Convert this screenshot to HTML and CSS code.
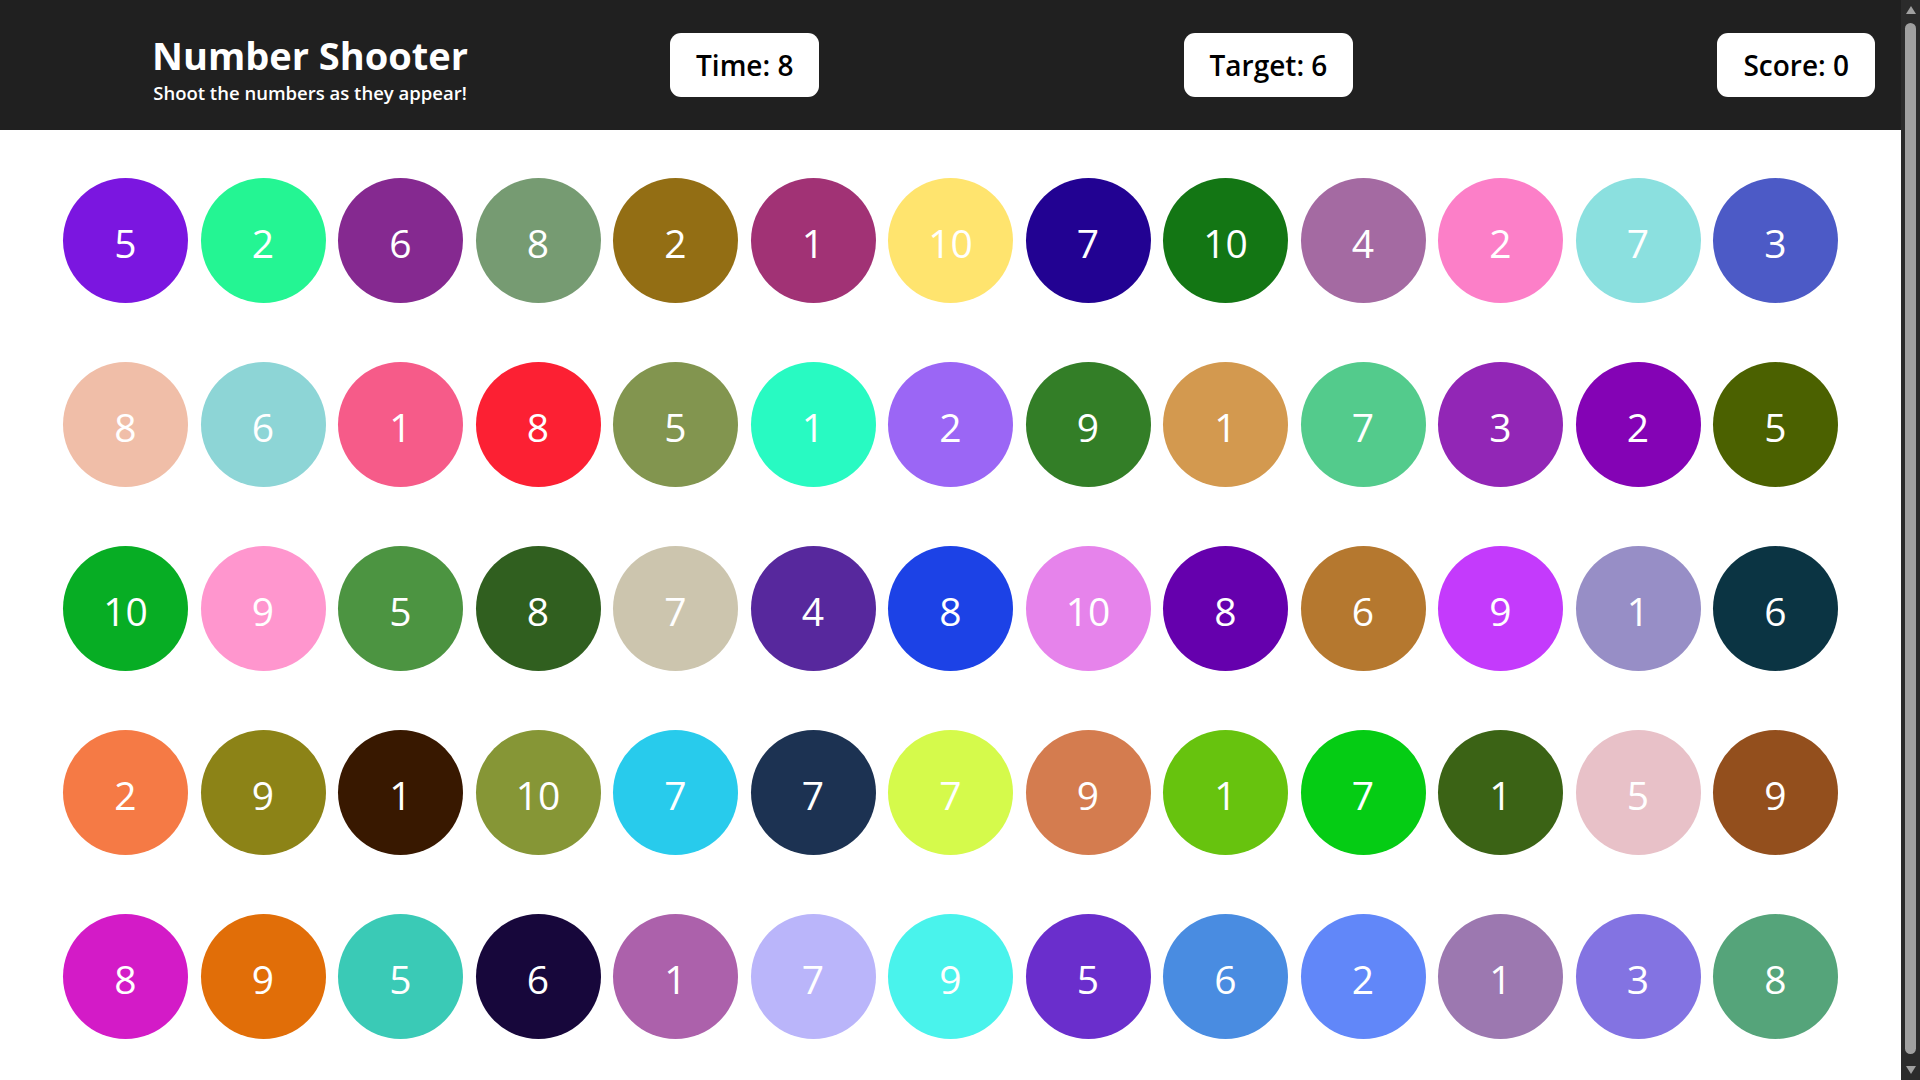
FILE: index.html
```html
<!DOCTYPE html>
<html lang="en">
<head>
<meta charset="utf-8">
<title>Number Shooter</title>
<link rel="stylesheet" href="styles.css">
</head>
<body>
<div class="page">
<header class="topbar">
  <div class="brand">
    <h1 class="brand-title">Number Shooter</h1>
    <p class="brand-sub">Shoot the numbers as they appear!</p>
  </div>
  <div class="stats">
    <div class="stat">Time: 8</div>
    <div class="stat">Target: 6</div>
    <div class="stat">Score: 0</div>
  </div>
</header>
<main class="board">
  <div class="ball" style="background:#7b16e0">5</div>
  <div class="ball" style="background:#24f593">2</div>
  <div class="ball" style="background:#852990">6</div>
  <div class="ball" style="background:#769b72">8</div>
  <div class="ball" style="background:#936e14">2</div>
  <div class="ball" style="background:#a13275">1</div>
  <div class="ball" style="background:#ffe46e">10</div>
  <div class="ball" style="background:#220292">7</div>
  <div class="ball" style="background:#137614">10</div>
  <div class="ball" style="background:#a46aa2">4</div>
  <div class="ball" style="background:#fc7fc8">2</div>
  <div class="ball" style="background:#8be0df">7</div>
  <div class="ball" style="background:#4c5ac6">3</div>

  <div class="ball" style="background:#f0bea8">8</div>
  <div class="ball" style="background:#8dd5d6">6</div>
  <div class="ball" style="background:#f65b89">1</div>
  <div class="ball" style="background:#fc2033">8</div>
  <div class="ball" style="background:#82954f">5</div>
  <div class="ball" style="background:#28fac2">1</div>
  <div class="ball" style="background:#9b66f5">2</div>
  <div class="ball" style="background:#337e27">9</div>
  <div class="ball" style="background:#d3994f">1</div>
  <div class="ball" style="background:#53cb8c">7</div>
  <div class="ball" style="background:#9226b6">3</div>
  <div class="ball" style="background:#8403b5">2</div>
  <div class="ball" style="background:#4b6100">5</div>

  <div class="ball" style="background:#07ad24">10</div>
  <div class="ball" style="background:#ff96ce">9</div>
  <div class="ball" style="background:#4c9441">5</div>
  <div class="ball" style="background:#305f1f">8</div>
  <div class="ball" style="background:#ccc5ae">7</div>
  <div class="ball" style="background:#57289d">4</div>
  <div class="ball" style="background:#1c42e6">8</div>
  <div class="ball" style="background:#e683eb">10</div>
  <div class="ball" style="background:#6500ad">8</div>
  <div class="ball" style="background:#b5782f">6</div>
  <div class="ball" style="background:#c43afc">9</div>
  <div class="ball" style="background:#978ec6">1</div>
  <div class="ball" style="background:#0b3443">6</div>

  <div class="ball" style="background:#f57a45">2</div>
  <div class="ball" style="background:#8c8317">9</div>
  <div class="ball" style="background:#381800">1</div>
  <div class="ball" style="background:#869636">10</div>
  <div class="ball" style="background:#28cbec">7</div>
  <div class="ball" style="background:#1c3252">7</div>
  <div class="ball" style="background:#d5fa4b">7</div>
  <div class="ball" style="background:#d47c4f">9</div>
  <div class="ball" style="background:#67c30e">1</div>
  <div class="ball" style="background:#05cc14">7</div>
  <div class="ball" style="background:#3b6315">1</div>
  <div class="ball" style="background:#e8c1c8">5</div>
  <div class="ball" style="background:#934f1d">9</div>

  <div class="ball" style="background:#d31bc7">8</div>
  <div class="ball" style="background:#e16e08">9</div>
  <div class="ball" style="background:#3acab6">5</div>
  <div class="ball" style="background:#17073b">6</div>
  <div class="ball" style="background:#ac61ab">1</div>
  <div class="ball" style="background:#bab5fa">7</div>
  <div class="ball" style="background:#49f3ec">9</div>
  <div class="ball" style="background:#6a2ecc">5</div>
  <div class="ball" style="background:#498ce1">6</div>
  <div class="ball" style="background:#6187f9">2</div>
  <div class="ball" style="background:#9c78b0">1</div>
  <div class="ball" style="background:#8373e2">3</div>
  <div class="ball" style="background:#55a47a">8</div>
</main>
</div>
<div class="scrollbar" aria-hidden="true">
  <div class="sb-arrow sb-up"></div>
  <div class="sb-thumb"></div>
  <div class="sb-arrow sb-down"></div>
</div>
</body>
</html>
```
FILE: styles.css
```css
html, body {
  margin: 0;
  padding: 0;
  background: #ffffff;
  font-family: "Open Sans", "Noto Sans", sans-serif;
}

.page {
  margin-right: 19px;
}

/* imitation of the classic browser scrollbar seen at the right edge */
.scrollbar {
  position: fixed;
  top: 0;
  right: 0;
  bottom: 0;
  width: 19px;
  background: #2b2b2b;
  display: flex;
  flex-direction: column;
  align-items: center;
  padding: 6px 0 6px;
  box-sizing: border-box;
}

.sb-arrow {
  width: 0;
  height: 0;
  border-left: 5px solid transparent;
  border-right: 5px solid transparent;
  flex: none;
}

.sb-up {
  border-bottom: 8px solid #a0a0a0;
}

.sb-down {
  border-top: 8px solid #a0a0a0;
}

.sb-thumb {
  flex: 1;
  width: 11px;
  margin: 9px 0 12px;
  background: #a0a0a0;
  border-radius: 6px;
}

.topbar {
  height: 130px;
  background: #202020;
  display: flex;
  align-items: center;
  padding: 0 26px 0 150px;
  box-sizing: border-box;
}

.brand {
  width: 320px;
  text-align: center;
  color: #ffffff;
  padding-top: 8px;
  flex: none;
  white-space: nowrap;
}

.brand-title {
  margin: 0;
  font-size: 38px;
  line-height: 44px;
  font-weight: 700;
}

.brand-sub {
  margin: 4px 0 0;
  font-size: 18.5px;
  line-height: 24px;
  font-weight: 600;
}

.stats {
  flex: 1;
  margin-left: 200px;
  display: flex;
  justify-content: space-between;
  align-items: center;
}

.stat {
  height: 64px;
  padding: 0 26px;
  display: flex;
  align-items: center;
  background: #ffffff;
  color: #000000;
  border-radius: 11px;
  font-size: 28px;
  font-weight: 600;
  white-space: nowrap;
}

.board {
  display: grid;
  grid-template-columns: repeat(13, 125px);
  column-gap: 12.5px;
  row-gap: 59px;
  justify-content: center;
  padding: 48px 0 60px;
}

.ball {
  width: 125px;
  height: 125px;
  border-radius: 50%;
  display: flex;
  align-items: center;
  justify-content: center;
  color: #ffffff;
  font-size: 39px;
  line-height: 1;
  padding-top: 4px;
  box-sizing: border-box;
}
```
